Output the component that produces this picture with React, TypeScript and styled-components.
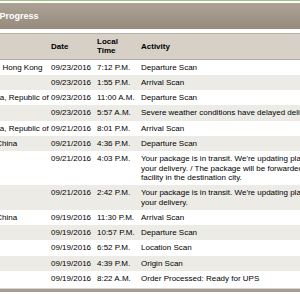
import styled, { createGlobalStyle } from 'styled-components';

type Scan = {
  location: string;
  date: string;
  time: string;
  activity: string;
};

const scans: Scan[] = [
  { location: 'Hong Kong, Hong Kong', date: '09/23/2016', time: '7:12 P.M.', activity: 'Departure Scan' },
  { location: '', date: '09/23/2016', time: '1:55 P.M.', activity: 'Arrival Scan' },
  { location: 'Seoul, Korea, Republic of', date: '09/23/2016', time: '11:00 A.M.', activity: 'Departure Scan' },
  { location: '', date: '09/23/2016', time: '5:57 A.M.', activity: 'Severe weather conditions have delayed delivery.' },
  { location: 'Seoul, Korea, Republic of', date: '09/21/2016', time: '8:01 P.M.', activity: 'Arrival Scan' },
  { location: 'Shanghai, China', date: '09/21/2016', time: '4:36 P.M.', activity: 'Departure Scan' },
  {
    location: '',
    date: '09/21/2016',
    time: '4:03 P.M.',
    activity:
      "Your package is in transit. We're updating plans to schedule your delivery. / The package will be forwarded to a UPS facility in the destination city.",
  },
  {
    location: '',
    date: '09/21/2016',
    time: '2:42 P.M.',
    activity: "Your package is in transit. We're updating plans to schedule your delivery.",
  },
  { location: 'Shanghai, China', date: '09/19/2016', time: '11:30 P.M.', activity: 'Arrival Scan' },
  { location: '', date: '09/19/2016', time: '10:57 P.M.', activity: 'Departure Scan' },
  { location: '', date: '09/19/2016', time: '6:52 P.M.', activity: 'Location Scan' },
  { location: '', date: '09/19/2016', time: '4:39 P.M.', activity: 'Origin Scan' },
  { location: '', date: '09/19/2016', time: '8:22 A.M.', activity: 'Order Processed: Ready for UPS' },
];

const App = () => {
  return (
    <Page>
      <GlobalStyle />
      <Frame>
        <TitleBar>Shipment Progress</TitleBar>
        <Table>
          <colgroup>
            <col style={{ width: 93 }} />
            <col style={{ width: 46 }} />
            <col style={{ width: 44 }} />
            <col style={{ width: 224 }} />
          </colgroup>
          <thead>
            <tr>
              <Th>Location</Th>
              <Th>Date</Th>
              <Th>
                Local
                <br />
                Time
              </Th>
              <Th>Activity</Th>
            </tr>
          </thead>
          <tbody>
            {scans.map((scan, i) => (
              <Row key={i} $alt={i % 2 === 1}>
                <Td $nowrap>{scan.location}</Td>
                <Td $nowrap>{scan.date}</Td>
                <Td $nowrap>{scan.time}</Td>
                <Td>{scan.activity}</Td>
              </Row>
            ))}
          </tbody>
        </Table>
        <Footer />
      </Frame>
    </Page>
  );
};

const GlobalStyle = createGlobalStyle`
  body {
    margin: 0;
    background: #ffffff;
    font-family: "Liberation Sans", Arial, sans-serif;
  }
`;

const Page = styled.div`
  width: 300px;
  height: 300px;
  overflow: hidden;
  background: #ffffff;
  border-top: 1px solid #9fc47e;
  box-sizing: border-box;
`;

const Frame = styled.div`
  margin-left: -46px;
  width: 420px;
`;

const TitleBar = styled.h2`
  margin: 2px 0 0;
  height: 26px;
  padding-left: 2px;

  display: flex;
  align-items: center;

  background: linear-gradient(#aba295, #968b7d);
  color: #ffffff;
  font-size: 9px;
  font-weight: bold;
`;

const Table = styled.table`
  margin-top: 4px;
  width: 407px;
  border-collapse: collapse;
  table-layout: fixed;

  font-size: 8px;
  line-height: 9.3px;
`;

const Th = styled.th`
  padding: 3px 4px;
  text-align: left;
  vertical-align: middle;

  background-color: #d6d0c6;
  border-top: 1px solid #bab2a6;
  border-bottom: 1px solid #b3ab9f;

  color: #000000;
  font-weight: bold;
`;

const Row = styled.tr<{ $alt: boolean }>`
  background-color: ${({ $alt }) => ($alt ? '#ecebe6' : '#ffffff')};
`;

const Td = styled.td<{ $nowrap?: boolean }>`
  padding: 3px 4px;
  vertical-align: top;
  white-space: ${({ $nowrap }) => ($nowrap ? 'nowrap' : 'normal')};
  color: #000000;
`;

const Footer = styled.div`
  margin-top: 2px;
  height: 3px;
  border-top: 1px solid #d8d5cf;
  background-color: #a69d90;
`;

export default App;
